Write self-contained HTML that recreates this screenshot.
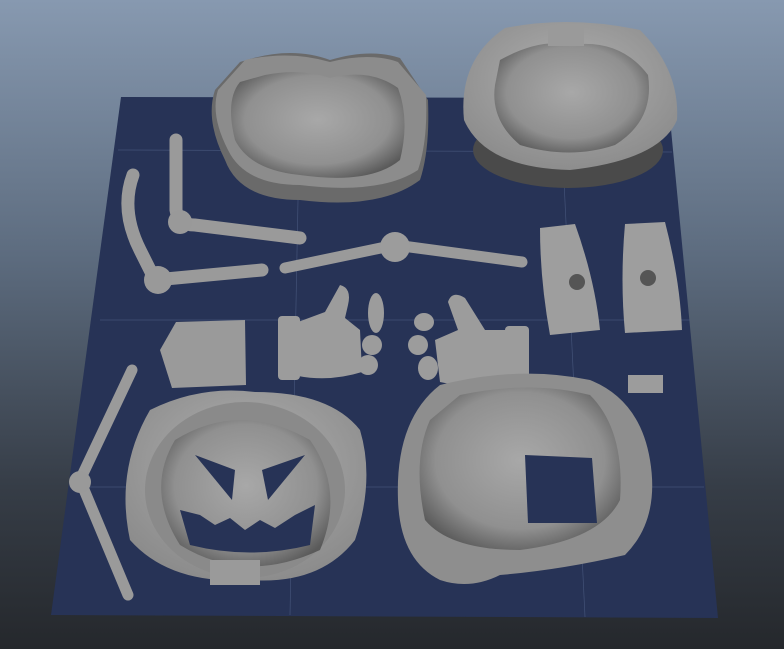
<!DOCTYPE html>
<html><head><meta charset="utf-8"><style>
html,body{margin:0;padding:0;width:784px;height:649px;overflow:hidden}
body{background:linear-gradient(#8799b0 0%,#5c6b7e 40%,#363d47 75%,#25282c 100%)}
svg{display:block}
</style></head><body>
<svg width="784" height="649" viewBox="0 0 784 649" xmlns="http://www.w3.org/2000/svg">
<defs>
<radialGradient id="cup" cx="50%" cy="45%" r="60%"><stop offset="0" stop-color="#a8a8a8"/><stop offset="0.7" stop-color="#909090"/><stop offset="1" stop-color="#5a5a5a"/></radialGradient>
<radialGradient id="rim" cx="50%" cy="40%" r="65%"><stop offset="0" stop-color="#b0b0b0"/><stop offset="1" stop-color="#8a8a8a"/></radialGradient>
</defs>
<polygon points="121,97 668,98 718,618 51,615" fill="#273356"/>
<g stroke="#4a5a80" stroke-width="0.7" opacity="0.8">
<line x1="118" y1="150" x2="672" y2="152"/><line x1="100" y1="320" x2="690" y2="320"/><line x1="82" y1="487" x2="704" y2="487"/>
<line x1="300" y1="97" x2="290" y2="615"/><line x1="560" y1="98" x2="585" y2="617"/>
</g>
<!-- top-left shell -->
<path d="M240,62 Q290,45 330,60 Q370,48 400,58 L428,100 Q430,150 420,180 Q380,210 300,200 Q240,200 225,160 Q205,120 215,90 Z" fill="#6a6a6a"/>
<path d="M245,60 Q290,50 330,62 Q370,52 398,62 L426,95 Q428,140 418,170 Q380,195 300,185 Q245,185 228,150 Q210,115 218,90 Z" fill="#8c8c8c"/>
<path d="M265,75 Q300,68 330,78 Q370,68 398,88 Q410,120 400,160 Q370,185 300,175 Q250,170 235,140 Q225,100 240,82 Z" fill="url(#cup)"/>
<!-- top-right shell -->
<ellipse cx="568" cy="150" rx="95" ry="38" fill="#4a4a4a"/>
<path d="M505,28 Q570,15 640,30 Q680,70 677,120 Q660,160 570,170 Q485,168 464,120 Q458,60 505,28 Z" fill="url(#rim)"/>
<path d="M500,60 Q540,38 570,45 Q620,38 648,75 Q655,120 615,145 Q570,160 520,145 Q490,120 495,85 Z" fill="url(#cup)"/>
<rect x="548" y="26" width="36" height="20" fill="#9a9a9a"/>
<!-- limbs -->
<g fill="none" stroke-linecap="round" stroke="#9a9a9a">
<path d="M176,140 L176,210 Q178,225 195,225 L300,238" stroke-width="13"/>
<path d="M133,175 Q120,210 140,250 L155,280 L262,270" stroke-width="13"/>
<path d="M285,268 L395,245 L522,262" stroke-width="11"/>
<path d="M132,370 L80,480 L128,595" stroke-width="11"/>
</g>
<circle cx="180" cy="222" r="12" fill="#999"/><circle cx="158" cy="280" r="14" fill="#999"/><circle cx="395" cy="247" r="15" fill="#9c9c9c"/><circle cx="80" cy="482" r="11" fill="#999"/>
<!-- hinges -->
<path d="M540,228 L575,224 Q595,280 600,330 L550,335 Q540,280 540,228 Z" fill="#9e9e9e"/>
<path d="M625,224 L665,222 Q680,280 682,330 L625,333 Q620,280 625,224 Z" fill="#9e9e9e"/>
<circle cx="577" cy="282" r="8" fill="#555"/><circle cx="648" cy="278" r="8" fill="#555"/>
<!-- block -->
<path d="M176,322 L245,320 L246,385 L172,388 L160,350 Z" fill="#9a9a9a"/>
<!-- hand left -->
<g fill="#9c9c9c">
<rect x="278" y="316" width="22" height="64" rx="4"/>
<path d="M298,322 L325,312 L340,285 Q352,288 348,305 L345,318 L360,330 L362,372 Q330,382 298,376 Z"/>
<ellipse cx="376" cy="313" rx="8" ry="20"/><ellipse cx="372" cy="345" rx="10" ry="10"/><ellipse cx="368" cy="365" rx="10" ry="10"/>
</g>
<!-- hand right -->
<g fill="#9c9c9c">
<rect x="505" y="326" width="24" height="54" rx="4"/>
<path d="M505,330 L485,330 L465,298 Q452,290 448,302 L458,330 L435,340 L440,382 Q475,390 507,380 Z"/>
<ellipse cx="424" cy="322" rx="10" ry="9"/><ellipse cx="418" cy="345" rx="10" ry="10"/><ellipse cx="428" cy="368" rx="10" ry="12"/>
</g>
<!-- bottom-left pumpkin -->
<path d="M150,410 Q200,385 255,392 Q330,392 360,430 Q375,480 355,540 Q320,585 250,580 Q170,585 130,540 Q115,470 150,410 Z" fill="url(#rim)"/>
<ellipse cx="245" cy="490" rx="100" ry="88" fill="#8a8a8a"/>
<path d="M175,440 Q240,400 310,440 Q345,490 320,550 Q245,585 180,545 Q145,490 175,440 Z" fill="url(#cup)"/>
<path d="M195,455 L235,470 L232,500 Z" fill="#273356"/><path d="M305,455 L262,470 L268,500 Z" fill="#273356"/>
<path d="M180,510 L200,515 L215,525 L230,518 L245,530 L260,520 L275,528 L295,515 L315,505 L310,545 Q250,560 190,545 Z" fill="#273356"/>
<rect x="210" y="560" width="50" height="25" fill="#9a9a9a"/>
<!-- bottom-right shell -->
<path d="M440,385 Q520,365 590,380 Q640,400 650,460 Q660,520 625,555 Q560,570 500,575 Q470,590 440,580 Q400,560 398,500 Q395,420 440,385 Z" fill="#8e8e8e"/>
<path d="M460,395 Q530,380 590,395 Q625,430 620,500 Q600,540 520,550 Q450,550 425,520 Q412,460 430,420 Z" fill="url(#cup)"/>
<polygon points="525,455 592,458 597,523 528,523" fill="#273356"/>
<rect x="628" y="375" width="35" height="18" fill="#9c9c9c"/>
</svg>
</body></html>
